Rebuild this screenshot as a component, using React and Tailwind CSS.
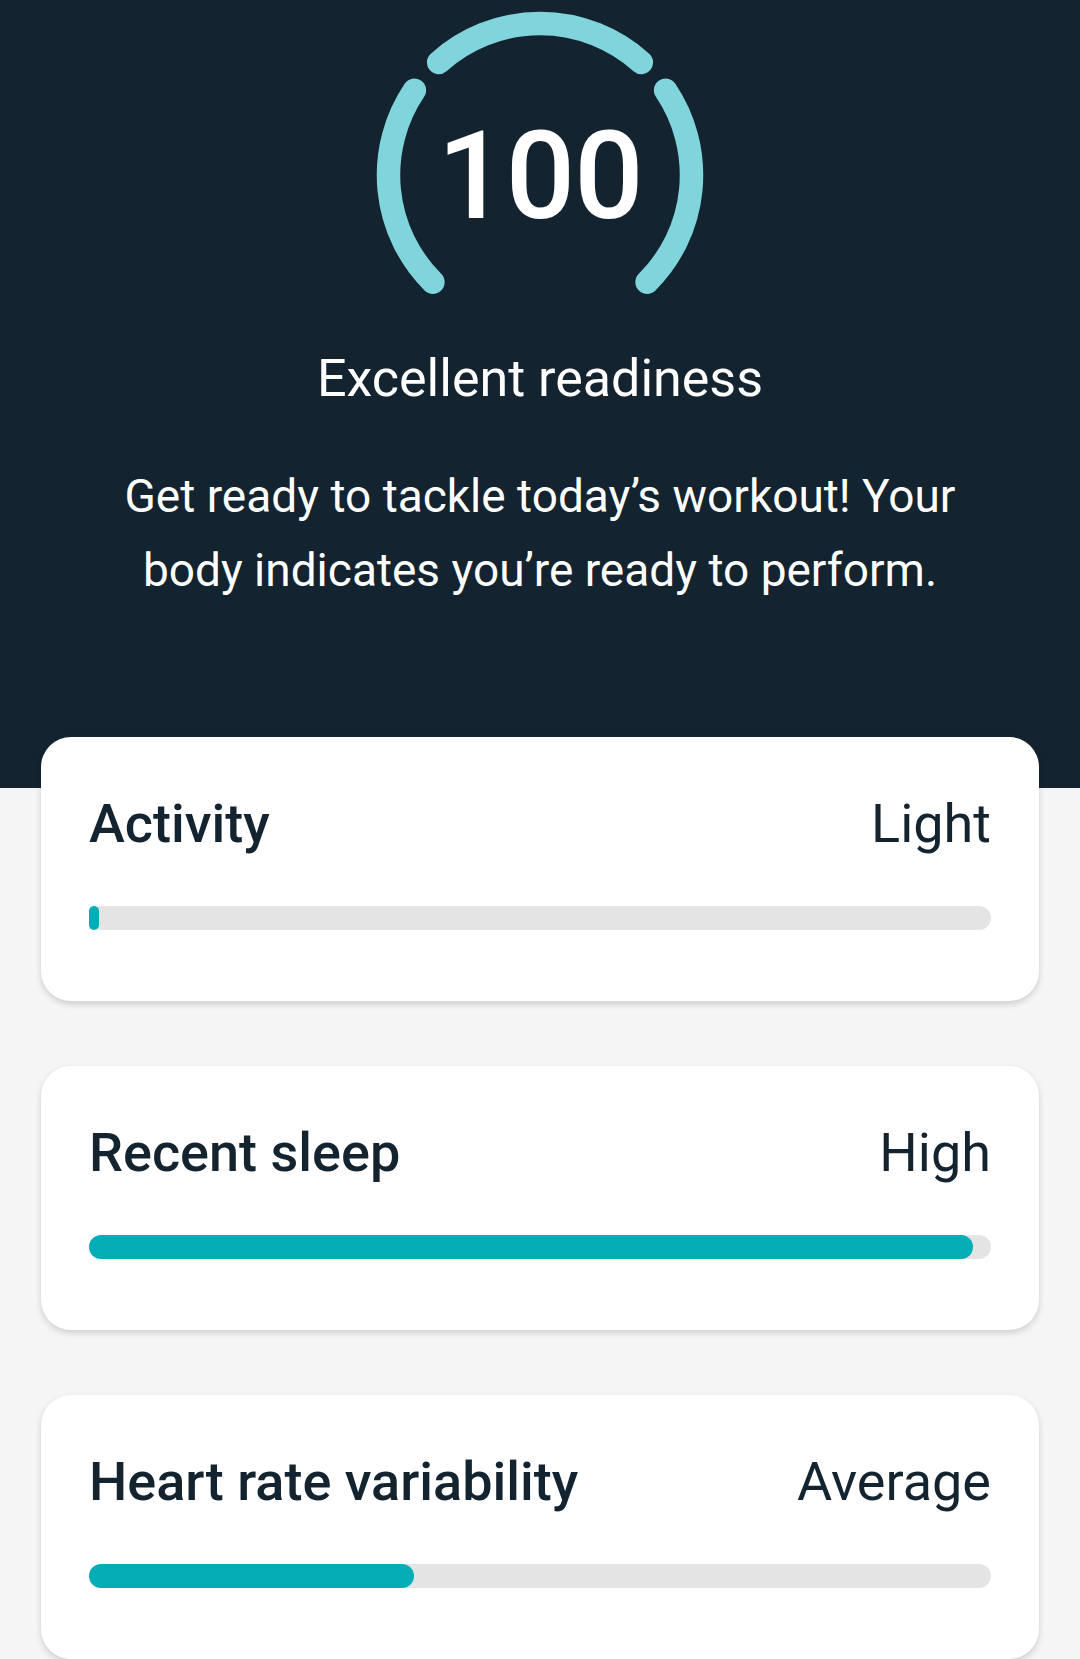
import React from 'react';

const metrics = [
  { label: 'Activity', level: 'Light', pct: 1.1 },
  { label: 'Recent sleep', level: 'High', pct: 98 },
  { label: 'Heart rate variability', level: 'Average', pct: 36 },
];

// gauge geometry (svg coords)
const CX = 170;
const CY = 175;
const R = 151.5;

const pt = (deg) => {
  const a = (deg * Math.PI) / 180;
  return [CX + R * Math.sin(a), CY - R * Math.cos(a)];
};

const arc = (from, to) => {
  const [x1, y1] = pt(from);
  const [x2, y2] = pt(to);
  return `M ${x1} ${y1} A ${R} ${R} 0 0 1 ${x2} ${y2}`;
};

function ScoreGauge({ score }) {
  const segments = [
    [-135, -56],
    [-42, 42],
    [56, 135],
  ];
  return (
    <div className="relative w-[340px] h-[300px]">
      <svg width="340" height="300" viewBox="0 0 340 300">
        {segments.map(([a, b]) => (
          <path
            key={a}
            d={arc(a, b)}
            fill="none"
            stroke="#7fd5db"
            strokeWidth="23.5"
            strokeLinecap="round"
          />
        ))}
      </svg>
      <div className="absolute inset-0 flex items-center justify-center pt-[54px]">
        <span className="text-[122px] leading-none font-medium text-white tracking-[-1px]">{score}</span>
      </div>
    </div>
  );
}

function MetricCard({ label, level, pct }) {
  return (
    <div className="bg-white rounded-[30px] pt-[55px] pb-[71px] px-[48px] shadow-[0_3px_6px_rgba(0,0,0,0.16)]">
      <div className="flex items-baseline justify-between text-[54px] leading-[64px] text-[#132430]">
        <span className="font-medium">{label}</span>
        <span>{level}</span>
      </div>
      <div className="mt-[50px] h-[24px] rounded-full bg-[#e4e4e4]">
        <div className="h-full min-w-[10px] rounded-full bg-[#02adb6]" style={{ width: `${pct}%` }} />
      </div>
    </div>
  );
}

export default function App() {
  return (
    <div className="min-h-screen bg-[#f5f5f5] font-['Roboto',sans-serif] overflow-hidden">
      <header className="h-[788px] bg-[#13232f] flex flex-col items-center text-white">
        <ScoreGauge score={100} />
        <h1 className="mt-[49px] text-[52px] leading-[60px]">Excellent readiness</h1>
        <p className="mt-[50px] text-[46px] leading-[74px] text-center">
          Get ready to tackle today’s workout! Your
          <br />
          body indicates you’re ready to perform.
        </p>
      </header>

      <div className="-mt-[51px] px-[41px] flex flex-col gap-[65px] pb-[60px]">
        {metrics.map((m) => (
          <MetricCard key={m.label} {...m} />
        ))}
      </div>
    </div>
  );
}
